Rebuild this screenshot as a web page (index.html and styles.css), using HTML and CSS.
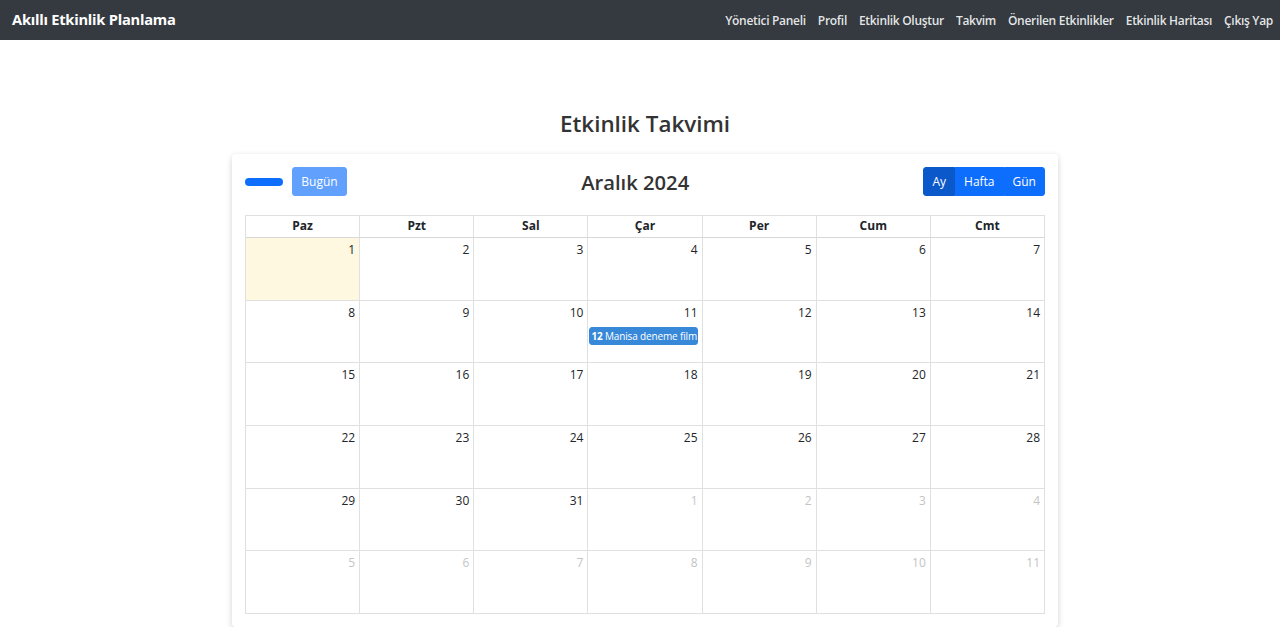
FILE: index.html
```html
<!DOCTYPE html>
<html lang="tr">
<head>
<meta charset="utf-8">
<title>Etkinlik Takvimi</title>
<link rel="stylesheet" href="styles.css">
</head>
<body>
<nav class="navbar">
  <a class="brand" href="#">Akıllı Etkinlik Planlama</a>
  <ul class="nav-links">
    <li><a href="#">Yönetici Paneli</a></li>
    <li><a href="#">Profil</a></li>
    <li><a href="#">Etkinlik Oluştur</a></li>
    <li><a href="#">Takvim</a></li>
    <li><a href="#">Önerilen Etkinlikler</a></li>
    <li><a href="#">Etkinlik Haritası</a></li>
    <li><a href="#">Çıkış Yap</a></li>
  </ul>
</nav>
<main class="container">
  <h2 class="page-title">Etkinlik Takvimi</h2>
  <div class="card">
    <div class="toolbar">
      <div class="tb-left">
        <div class="btn-group nav-pair"><span class="btn-empty"></span><span class="btn-empty"></span></div>
        <button class="btn btn-today">Bugün</button>
      </div>
      <h3 class="cal-title">Aralık 2024</h3>
      <div class="btn-group views">
        <button class="btn btn-view active">Ay</button>
        <button class="btn btn-view">Hafta</button>
        <button class="btn btn-view">Gün</button>
      </div>
    </div>
    <div class="grid">
      <div class="head">Paz</div><div class="head">Pzt</div><div class="head">Sal</div><div class="head">Çar</div><div class="head">Per</div><div class="head">Cum</div><div class="head">Cmt</div>

      <div class="day today"><span class="num">1</span></div>
      <div class="day"><span class="num">2</span></div>
      <div class="day"><span class="num">3</span></div>
      <div class="day"><span class="num">4</span></div>
      <div class="day"><span class="num">5</span></div>
      <div class="day"><span class="num">6</span></div>
      <div class="day"><span class="num">7</span></div>

      <div class="day"><span class="num">8</span></div>
      <div class="day"><span class="num">9</span></div>
      <div class="day"><span class="num">10</span></div>
      <div class="day"><span class="num">11</span><div class="event"><b>12</b> Manisa deneme film</div></div>
      <div class="day"><span class="num">12</span></div>
      <div class="day"><span class="num">13</span></div>
      <div class="day"><span class="num">14</span></div>

      <div class="day"><span class="num">15</span></div>
      <div class="day"><span class="num">16</span></div>
      <div class="day"><span class="num">17</span></div>
      <div class="day"><span class="num">18</span></div>
      <div class="day"><span class="num">19</span></div>
      <div class="day"><span class="num">20</span></div>
      <div class="day"><span class="num">21</span></div>

      <div class="day"><span class="num">22</span></div>
      <div class="day"><span class="num">23</span></div>
      <div class="day"><span class="num">24</span></div>
      <div class="day"><span class="num">25</span></div>
      <div class="day"><span class="num">26</span></div>
      <div class="day"><span class="num">27</span></div>
      <div class="day"><span class="num">28</span></div>

      <div class="day"><span class="num">29</span></div>
      <div class="day"><span class="num">30</span></div>
      <div class="day"><span class="num">31</span></div>
      <div class="day other"><span class="num">1</span></div>
      <div class="day other"><span class="num">2</span></div>
      <div class="day other"><span class="num">3</span></div>
      <div class="day other"><span class="num">4</span></div>

      <div class="day other"><span class="num">5</span></div>
      <div class="day other"><span class="num">6</span></div>
      <div class="day other"><span class="num">7</span></div>
      <div class="day other"><span class="num">8</span></div>
      <div class="day other"><span class="num">9</span></div>
      <div class="day other"><span class="num">10</span></div>
      <div class="day other"><span class="num">11</span></div>
    </div>
  </div>
</main>
</body>
</html>
```

FILE: styles.css
```css
* { box-sizing: border-box; }
html, body { margin: 0; padding: 0; }
body {
  font-family: "Open Sans", "Noto Sans", sans-serif;
  color: #212529;
  background: #fff;
  overflow: hidden;
}
.navbar {
  height: 40px;
  background: #343a40;
  display: flex;
  align-items: center;
  justify-content: space-between;
  padding: 0 7px 3px 12px;
}
.brand {
  color: #fff;
  text-decoration: none;
  font-weight: 700;
  font-size: 14.7px;
  letter-spacing: -0.25px;
}
.nav-links {
  list-style: none;
  margin: 0;
  padding: 0;
  display: flex;
  gap: 12px;
}
.nav-links a {
  color: rgba(255,255,255,0.88);
  text-decoration: none;
  font-size: 12px;
  font-weight: 600;
  letter-spacing: -0.3px;
}
.container {
  width: 836px;
  padding-left: 10px;
  margin: 0 auto;
  display: flex;
  flex-direction: column;
  align-items: center;
}
.page-title {
  margin: 68px 0 14px;
  font-size: 22.4px;
  font-weight: 600;
  color: #333;
  line-height: 32px;
}
.card {
  width: 826px;
  background: #fff;
  box-shadow: 0 2px 6px rgba(0,0,0,0.18);
  border-radius: 4px;
  padding: 13px;
}
.toolbar {
  display: flex;
  align-items: center;
  justify-content: space-between;
  height: 29px;
  margin-bottom: 19px;
}
.tb-left { display: flex; align-items: center; gap: 9px; }
.nav-pair {
  display: flex;
  width: 38px;
  height: 8px;
  background: #0d6efd;
  border-radius: 4px;
}
.btn-empty { flex: 1; }
.btn {
  font-family: inherit;
  border: 1px solid #0d6efd;
  background: #0d6efd;
  color: #fff;
  font-size: 12px;
  height: 29px;
  padding: 0 10px;
  border-radius: 3px;
  cursor: pointer;
}
.btn-today {
  opacity: 0.65;
  width: 55px;
  padding: 0;
}
.cal-title {
  margin: 0;
  font-size: 20.2px;
  font-weight: 600;
  color: #333;
}
.views { display: flex; }
.btn-view { border-radius: 0; padding: 0 8px; }
.btn-view:first-child { border-radius: 3px 0 0 3px; }
.btn-view:last-child { border-radius: 0 3px 3px 0; }
.btn-view.active { background: #0a58ca; border-color: #0a58ca; }
.grid {
  display: grid;
  grid-template-columns: repeat(7, minmax(0, 1fr));
  grid-template-rows: 22px repeat(6, 62.7px);
  border-top: 1px solid #e0e0e0;
  border-left: 1px solid #e0e0e0;
}
.head {
  border-right: 1px solid #e0e0e0;
  border-bottom: 1px solid #d8d8d8;
  text-align: center;
  font-weight: 700;
  font-size: 12px;
  line-height: 20px;
}
.day {
  border-right: 1px solid #e0e0e0;
  border-bottom: 1px solid #e0e0e0;
  display: flex;
  flex-direction: column;
  align-items: stretch;
  padding: 3px 4px 0 1px;
  font-size: 12px;
  min-width: 0;
}
.num { text-align: right; line-height: 18px; }
.day.today { background: #fef8e0; }
.day.other .num { color: #c4c4c4; }
.event {
  margin-top: 5px;
  background: #3788d8;
  border: 1px solid #3788d8;
  border-radius: 3px;
  color: #fff;
  font-size: 10px;
  letter-spacing: -0.15px;
  line-height: 16px;
  padding: 0 1px;
  white-space: nowrap;
  overflow: hidden;
}
.event b { font-weight: 700; }
```
